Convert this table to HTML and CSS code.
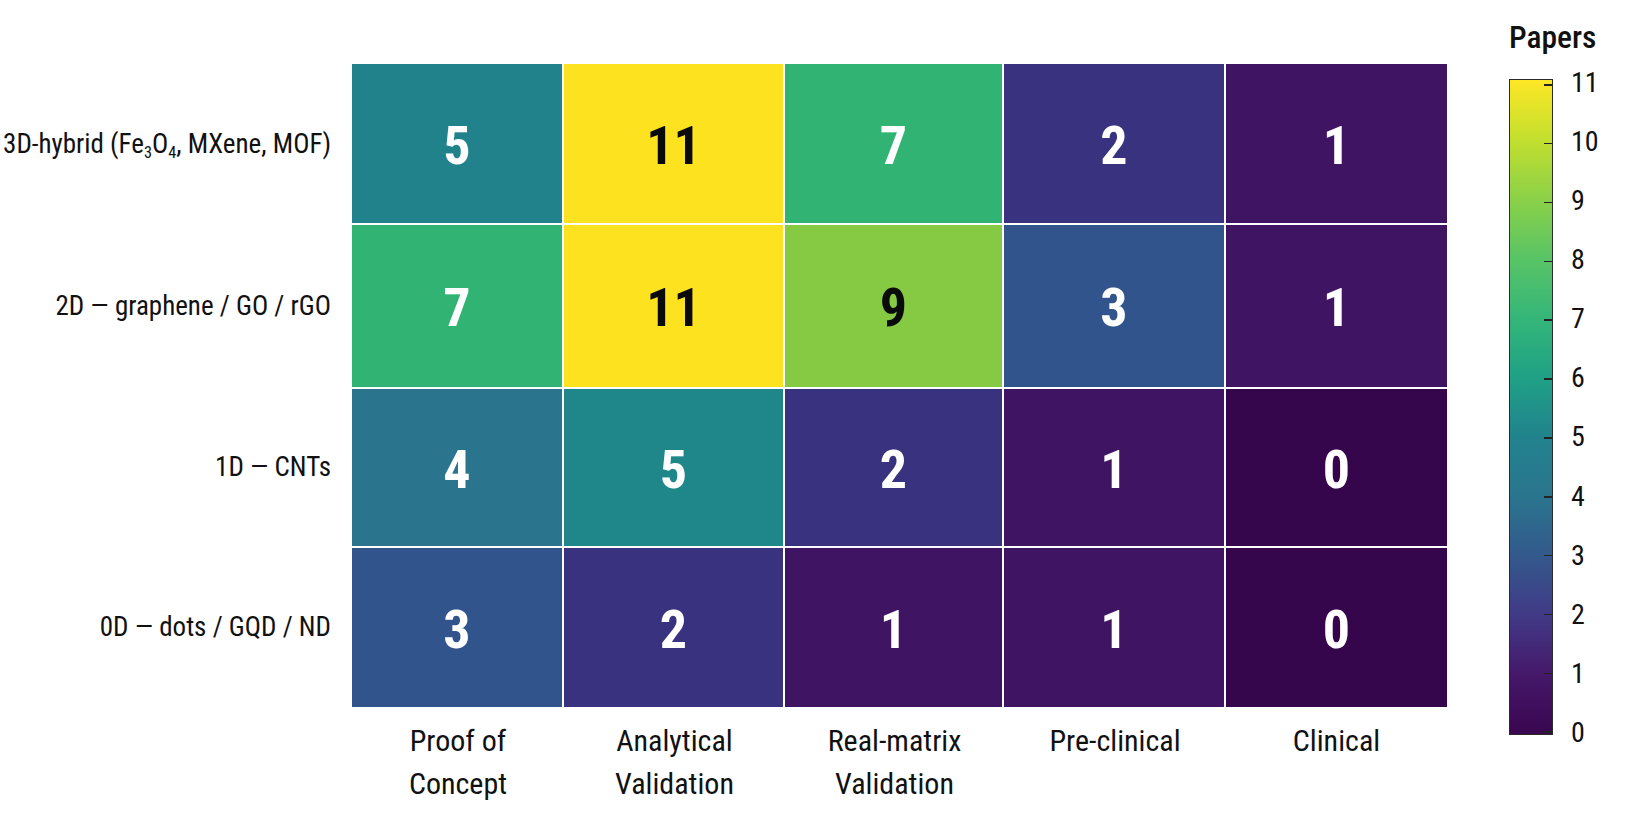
FILE: index.html
```html
<!DOCTYPE html>
<html lang="en">
<head>
<meta charset="utf-8">
<title>Papers heatmap</title>
<link rel="stylesheet" href="styles.css">
</head>
<body>
<div class="figure">
  <div class="legend-title">Papers</div>

  <div class="ylabels">
    <div class="ylabel"><span>3D-hybrid (Fe<sub>3</sub>O<sub>4</sub>, MXene, MOF)</span></div>
    <div class="ylabel"><span>2D — graphene / GO / rGO</span></div>
    <div class="ylabel"><span>1D — CNTs</span></div>
    <div class="ylabel"><span>0D — dots / GQD / ND</span></div>
  </div>

  <div class="heatmap">
    <div class="cell v5">5</div>
    <div class="cell v11 dark">11</div>
    <div class="cell v7">7</div>
    <div class="cell v2">2</div>
    <div class="cell v1">1</div>

    <div class="cell v7">7</div>
    <div class="cell v11 dark">11</div>
    <div class="cell v9 dark">9</div>
    <div class="cell v3">3</div>
    <div class="cell v1">1</div>

    <div class="cell v4">4</div>
    <div class="cell v5b">5</div>
    <div class="cell v2">2</div>
    <div class="cell v1">1</div>
    <div class="cell v0">0</div>

    <div class="cell v3">3</div>
    <div class="cell v2">2</div>
    <div class="cell v1">1</div>
    <div class="cell v1">1</div>
    <div class="cell v0">0</div>
  </div>

  <div class="xlabels">
    <div class="xlabel">Proof of<br>Concept</div>
    <div class="xlabel">Analytical<br>Validation</div>
    <div class="xlabel">Real-matrix<br>Validation</div>
    <div class="xlabel">Pre-clinical</div>
    <div class="xlabel">Clinical</div>
  </div>

  <div class="legend">
    <div class="colorbar">
      <span class="tick"></span><span class="tick"></span><span class="tick"></span>
      <span class="tick"></span><span class="tick"></span><span class="tick"></span>
      <span class="tick"></span><span class="tick"></span><span class="tick"></span>
      <span class="tick"></span><span class="tick"></span><span class="tick"></span>
    </div>
    <div class="ticklabels">
      <span>11</span><span>10</span><span>9</span><span>8</span><span>7</span><span>6</span>
      <span>5</span><span>4</span><span>3</span><span>2</span><span>1</span><span>0</span>
    </div>
  </div>
</div>
</body>
</html>
```

FILE: styles.css
```css
html, body {
  margin: 0;
  padding: 0;
  background: #ffffff;
}

body {
  font-family: Roboto, "Liberation Sans", sans-serif;
  font-stretch: 75%;
  color: #111111;
  width: 1627px;
  height: 822px;
  overflow: hidden;
}

.figure {
  display: grid;
  grid-template-columns: 352px 1095px 180px;
  grid-template-rows: 64px 643px auto;
}

/* legend title */
.legend-title {
  grid-column: 3;
  grid-row: 1;
  padding-left: 62px;
  padding-top: 22px;
  font-size: 31.5px;
  line-height: 31px;
  font-weight: 500;
  color: #111;
}

/* row labels */
.ylabels {
  grid-column: 1;
  grid-row: 2;
  display: grid;
  grid-template-rows: 160px 163px 159px 161px;
  padding-right: 21px;
  min-width: 0;
}

.ylabel {
  display: flex;
  align-items: center;
  justify-content: flex-end;
  min-width: 0;
  font-size: 27px;
  white-space: nowrap;
  color: #111;
}

.ylabel sub {
  font-size: 0.6em;
  vertical-align: -0.3em;
  line-height: 0;
}

/* heatmap */
.heatmap {
  grid-column: 2;
  grid-row: 2;
  display: grid;
  grid-template-columns: 210px 219px 217px 220px 221px;
  grid-template-rows: 159px 162px 157px 159px;
  gap: 2px;
  background: #ffffff;
}

.cell {
  display: flex;
  align-items: center;
  justify-content: center;
  font-size: 54px;
  font-weight: bold;
  color: #ffffff;
  padding-top: 3px;
  box-sizing: border-box;
}

.cell.dark {
  color: #0a0a0a;
}

.v0  { background: #35064b; }
.v1  { background: #3f1462; }
.v2  { background: #39327f; }
.v3  { background: #30548b; }
.v4  { background: #2a748e; }
.v5  { background: #21828b; }
.v5b { background: #1f878a; }
.v7  { background: #31b473; }
.v9  { background: #86c943; }
.v11 { background: #fde21f; }

/* column labels */
.xlabels {
  grid-column: 2;
  grid-row: 3;
  display: grid;
  grid-template-columns: 212px 221px 219px 222px 221px;
  padding-top: 13px;
}

.xlabel {
  text-align: center;
  font-size: 30px;
  line-height: 42.7px;
  color: #111;
}

/* colorbar */
.legend {
  grid-column: 3;
  grid-row: 2 / 4;
  display: flex;
  align-items: flex-start;
  padding-left: 62px;
}

.colorbar {
  box-sizing: border-box;
  width: 44px;
  height: 656px;
  margin-top: 15px;
  border: 1px solid #2a2a2a;
  background: linear-gradient(to top,
    #3a0650 0%,
    #45186a 9.1%,
    #413a86 18.2%,
    #33598c 27.3%,
    #2a758e 36.4%,
    #21838d 45.5%,
    #1fa186 54.5%,
    #34b679 63.6%,
    #58c465 72.7%,
    #8bd148 81.8%,
    #c3df2e 90.9%,
    #fde725 100%);
  display: flex;
  flex-direction: column;
  justify-content: space-between;
  align-items: flex-end;
  padding-top: 4px;
  padding-bottom: 1px;
}

.tick {
  display: block;
  width: 8px;
  height: 1.5px;
  background: #222;
}

.ticklabels {
  display: flex;
  flex-direction: column;
  justify-content: space-between;
  height: 680px;
  margin-top: 4px;
  margin-left: 18px;
  font-size: 28px;
  line-height: 30px;
  color: #111;
}
```
